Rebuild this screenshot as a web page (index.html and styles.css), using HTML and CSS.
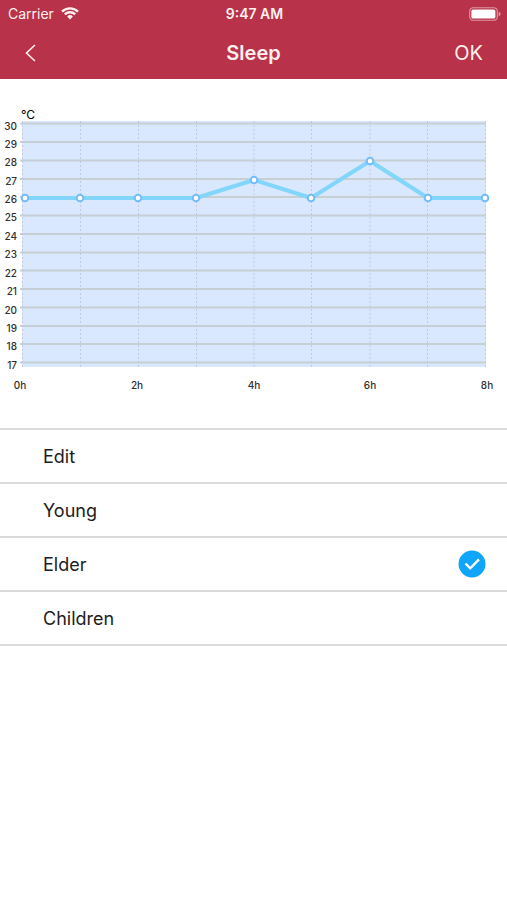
FILE: index.html
```html
<!DOCTYPE html>
<html lang="en">
<head>
<meta charset="utf-8">
<meta name="viewport" content="width=device-width, initial-scale=1">
<title>Sleep</title>
<link rel="stylesheet" href="styles.css">
</head>
<body>
<header class="header">
  <div class="status">
    <div class="carrier">
      <span>Carrier</span>
      <svg class="wifi" viewBox="0 0 18 13" aria-hidden="true">
        <path d="M1 4.6a11.5 11.5 0 0 1 16 0M3.8 7.4a7.5 7.5 0 0 1 10.4 0" fill="none" stroke="currentColor" stroke-width="2.4"/>
        <path d="M9 12.4L6.1 9.5a4.1 4.1 0 0 1 5.8 0z" fill="currentColor"/>
      </svg>
    </div>
    <time class="clock">9:47 AM</time>
    <svg class="battery" viewBox="0 0 32 14" aria-hidden="true">
      <rect x="0.7" y="0.7" width="27.6" height="12.6" rx="3.6" fill="none" stroke="currentColor" stroke-width="1.1" opacity="0.5"/>
      <rect x="2.4" y="2.4" width="24" height="9.2" rx="1.6" fill="currentColor"/>
      <path d="M29.7 4.8q2 .8 2 2.2t-2 2.2z" fill="currentColor" opacity="0.5"/>
    </svg>
  </div>
  <nav class="nav">
    <button class="back" type="button" aria-label="Back">
      <svg class="chevron" viewBox="0 0 12 18" aria-hidden="true"><path d="M11 1L2.500 9l8.500 8" fill="none" stroke="currentColor" stroke-width="1.6"/></svg>
    </button>
    <h1 class="title">Sleep</h1>
    <button class="ok" type="button">OK</button>
  </nav>
</header>
<main>
  <svg class="chart" viewBox="0 0 507 349" role="img" aria-label="Temperature by hour of sleep">
    <rect class="plot" x="22" y="42" width="464" height="246"/>
    <path class="rows" d="M20 44.5H486M20 63H486M20 81.5H486M20 100H486M20 118H486M20 136.5H486M20 155H486M20 173.5H486M20 191.5H486M20 210H486M20 228.5H486M20 247H486M20 265H486M20 283.5H486"/>
    <path class="hours" d="M22.5 42V288M80.5 42V288M138.5 42V288M196.5 42V288M254 42V288M311.5 42V288M370 42V288M427.5 42V288M485.5 42V288"/>
    <polyline class="line" points="25,119 80,119 138,119 196,119 254,101 311,119 370,82 428,119 485,119"/>
    <g class="points">
      <circle cx="25" cy="119" r="3.3"/><circle cx="80" cy="119" r="3.3"/><circle cx="138" cy="119" r="3.3"/>
      <circle cx="196" cy="119" r="3.3"/><circle cx="254" cy="101" r="3.3"/><circle cx="311" cy="119" r="3.3"/>
      <circle cx="370" cy="82" r="3.3"/><circle cx="428" cy="119" r="3.3"/><circle cx="485" cy="119" r="3.3"/>
    </g>
    <text class="unit" x="21" y="40">°C</text>
    <g class="degrees">
      <text x="17" y="51">30</text><text x="17" y="69">29</text><text x="17" y="87">28</text>
      <text x="17" y="106">27</text><text x="17" y="124">26</text><text x="17" y="142">25</text>
      <text x="17" y="161">24</text><text x="17" y="179">23</text><text x="17" y="198">22</text>
      <text x="17" y="216">21</text><text x="17" y="235">20</text><text x="17" y="253">19</text>
      <text x="17" y="271">18</text><text x="17" y="290">17</text>
    </g>
    <g class="times">
      <text x="20" y="310">0h</text><text x="137" y="310">2h</text><text x="254" y="310">4h</text>
      <text x="370" y="310">6h</text><text x="487" y="310">8h</text>
    </g>
  </svg>
  <form class="modes">
    <label class="mode"><span>Edit</span><input type="radio" name="mode" value="edit"></label>
    <label class="mode"><span>Young</span><input type="radio" name="mode" value="young"></label>
    <label class="mode"><span>Elder</span><input type="radio" name="mode" value="elder" checked>
      <svg class="check" viewBox="0 0 28 28" aria-hidden="true"><circle cx="14" cy="14" r="13.5" fill="#0ea5fb"/><path d="M7.5 13.5l4.700 4.800L21 9.300" fill="none" stroke="#fff" stroke-width="2.4"/></svg>
    </label>
    <label class="mode"><span>Children</span><input type="radio" name="mode" value="children"></label>
  </form>
</main>
</body>
</html>
```
FILE: styles.css
```css
* {
  box-sizing: border-box;
}

body {
  margin: 0;
  background: #fff;
  color: #1c1c1c;
  font-family: Inter, "Liberation Sans", sans-serif;
}

.header {
  background: #b83249;
  color: #fff0f0;
}

.status {
  display: grid;
  grid-template-columns: 1fr auto 1fr;
  align-items: center;
  height: 27px;
  padding: 0 6px 0 8px;
  font-size: 14px;
}

.carrier {
  display: flex;
  align-items: center;
  gap: 7px;
}

.wifi {
  width: 18px;
  height: 13px;
}

.clock {
  font-size: 14px;
  font-weight: 600;
}

.battery {
  justify-self: end;
  width: 32px;
  height: 14px;
  color: #fff;
}

.nav {
  display: grid;
  grid-template-columns: 1fr auto 1fr;
  align-items: center;
  height: 52px;
  padding: 0 24px;
}

.back,
.ok {
  padding: 0;
  border: 0;
  background: none;
  color: inherit;
  font: inherit;
  font-size: 20px;
}

.back {
  display: flex;
  justify-self: start;
}

.chevron {
  width: 12px;
  height: 18px;
}

.title {
  margin: 0;
  font-size: 20px;
  font-weight: 600;
}

.ok {
  justify-self: end;
}

.chart {
  display: block;
  width: 100%;
}

.plot {
  fill: #d9e7ff;
}

.rows {
  stroke: #c5cfd4;
  stroke-width: 2;
}

.hours {
  stroke: #c0cadc;
  stroke-dasharray: 2 2;
}

.line {
  fill: none;
  stroke: #82d5fb;
  stroke-width: 4;
  stroke-linejoin: round;
}

.points {
  fill: #fff;
  stroke: #75bdf8;
  stroke-width: 2;
}

.unit {
  font-size: 12px;
}

.degrees,
.times {
  fill: #303030;
  font-size: 10px;
  font-weight: 500;
}

.degrees {
  text-anchor: end;
}

.times {
  text-anchor: middle;
}

.modes {
  border-top: 2px solid #dadada;
}

.mode {
  display: flex;
  align-items: center;
  justify-content: space-between;
  height: 54px;
  padding: 0 21px 0 43px;
  border-bottom: 2px solid #dadada;
  font-size: 18px;
}

.mode input {
  appearance: none;
  width: 0;
  height: 0;
  margin: 0;
}

.mode span {
  flex: 1;
}

.check {
  width: 28px;
  height: 28px;
}
```
